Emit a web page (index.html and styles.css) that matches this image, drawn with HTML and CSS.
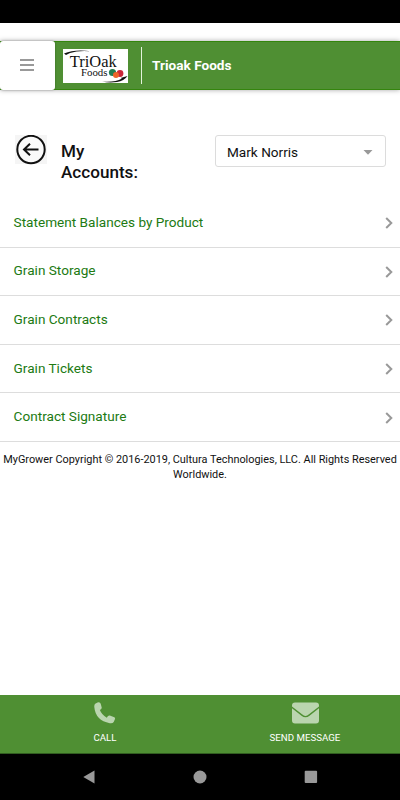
FILE: index.html
```html
<!DOCTYPE html>
<html lang="en">
<head>
<meta charset="utf-8">
<title>Trioak Foods</title>
<link rel="stylesheet" href="styles.css">
</head>
<body>
<div class="status"></div>
<header class="header">
  <button class="menu" aria-label="Menu"><i></i><i></i><i></i></button>
  <svg class="logo" viewBox="0 0 65 34">
    <rect width="65" height="34" fill="#fff"/>
    <path d="M1 4.500Q12-.2 28 2.300Q15 1.300 7 4L3 6Z" fill="#111"/>
    <path d="M39 32.500Q52 33.500 59 29.500L57.500 29L64.500 27Q61 32 54 33Q46 34 39 32.500Z" fill="#111"/>
    <text x="6.700" y="18" font-size="17" textLength="47" lengthAdjust="spacingAndGlyphs">TriOak</text>
    <text x="18" y="27.300" font-size="11" textLength="26.500" lengthAdjust="spacingAndGlyphs">Foods</text>
    <circle cx="49.500" cy="23.500" r="3.600" fill="#237c50"/>
    <circle cx="57" cy="24.500" r="3.400" fill="#cb2639"/>
    <circle cx="53" cy="26" r="3" fill="#ed6328"/>
  </svg>
  <span class="rule"></span>
  <h1>Trioak Foods</h1>
</header>
<main>
  <section class="account">
    <svg class="back" viewBox="0 0 32 30">
      <rect width="32" height="29" fill="#f5f5f5"/>
      <circle cx="16" cy="14.500" r="13.700" fill="#fafafa" stroke="#111" stroke-width="2"/>
      <path d="M23.500 14.500H9M15 8.700L9 14.500L15 20.300" fill="none" stroke="#111" stroke-width="2"/>
    </svg>
    <h2>My<br>Accounts:</h2>
    <div class="select"><span>Mark Norris</span><svg viewBox="0 0 10 5"><path d="M.5 0H9.500L5 4.800Z" fill="#999"/></svg></div>
  </section>
  <nav class="list">
    <a><span>Statement Balances by Product</span><svg viewBox="0 0 8 12"><path d="M1.200 1L6.300 6L1.200 11"/></svg></a>
    <a><span>Grain Storage</span><svg viewBox="0 0 8 12"><path d="M1.200 1L6.300 6L1.200 11"/></svg></a>
    <a><span>Grain Contracts</span><svg viewBox="0 0 8 12"><path d="M1.200 1L6.300 6L1.200 11"/></svg></a>
    <a><span>Grain Tickets</span><svg viewBox="0 0 8 12"><path d="M1.200 1L6.300 6L1.200 11"/></svg></a>
    <a><span>Contract Signature</span><svg viewBox="0 0 8 12"><path d="M1.200 1L6.300 6L1.200 11"/></svg></a>
  </nav>
  <p class="copyright">MyGrower Copyright © 2016-2019, Cultura Technologies, LLC. All Rights Reserved<br>Worldwide.</p>
</main>
<footer class="actions">
  <a class="call"><svg viewBox="0 0 22 22"><path d="M1.200 1.800L3.500.5Q6-.5 6.700 1.800L7.700 5.500Q8 7 5.900 8Q7.500 12.500 12.800 15.700Q14 13.300 15.800 13.600L19.700 15Q21.700 15.700 20.800 17.500L19.700 20Q18.600 21.700 15.800 21.200Q1.500 18.500.3 5Q.1 2.800 1.200 1.800Z"/></svg><span>CALL</span></a>
  <a class="message"><svg viewBox="0 0 27 22"><path d="M0 3.500Q0 .5 3 .5H24Q27 .5 27 3.500V4.500L17 12.300Q13.500 15.500 10 12.300L0 4.500Z"/><path d="M0 6.300L9.500 13.700Q13.500 16.800 17.500 13.700L27 6.300V18.500Q27 21.500 24 21.500H3Q0 21.500 0 18.500Z"/></svg><span>SEND MESSAGE</span></a>
</footer>
<div class="system">
  <svg viewBox="0 0 12 14"><path d="M11.500.5V13.500L.3 7Z"/></svg>
  <svg viewBox="0 0 14 14"><circle cx="7" cy="7" r="6.500"/></svg>
  <svg viewBox="0 0 14 14"><rect x=".7" y=".7" width="12.400" height="12.400" rx="1"/></svg>
</div>
</body>
</html>
```
FILE: styles.css
```css
* { box-sizing: border-box; }
body {
  margin: 0;
  height: 800px;
  display: flex;
  flex-direction: column;
  overflow: hidden;
  background: #fff;
  color: #111;
  font-family: Roboto, "Liberation Sans", sans-serif;
}
svg { display: block; flex: none; }
.status { height: 23px; background: #000; }
.header {
  height: 49px;
  margin-top: 18px;
  display: flex;
  align-items: center;
  background: #4f8f33;
  border: solid #34850d;
  border-width: 1px 0;
  box-shadow: 0 0 5px rgba(0, 0, 0, .35);
}
.menu {
  width: 55px;
  height: 49px;
  padding: 0 1px 2px 0;
  border: 0;
  border-radius: 3px;
  background: #fff;
  box-shadow: 0 0 2px rgba(0, 0, 0, .35);
  display: flex;
  flex-direction: column;
  align-items: center;
  justify-content: center;
  gap: 3px;
}
.menu i { width: 14px; height: 2px; background: #999; }
.logo { width: 65px; height: 34px; margin-left: 8px; }
.logo text { font-family: "Liberation Serif", serif; fill: #111; }
.rule { width: 1px; height: 37px; margin-left: 13px; background: #e4f3dc; }
h1 { margin: -2px 0 0 10px; color: #fff; font-size: 13.600px; font-weight: 700; line-height: 20px; }
.account { display: flex; align-items: flex-start; height: 109px; padding: 45px 14px 0 15px; }
.back { width: 32px; height: 30px; }
h2 { flex: 1; margin: 6px 0 0 14px; font-size: 17.100px; line-height: 20.500px; font-weight: 500; color: #111; }
.select {
  width: 171px;
  height: 32px;
  display: flex;
  align-items: center;
  justify-content: space-between;
  padding: 2px 12px 0 11px;
  border: 1px solid #dcdcdc;
  border-radius: 3px;
  font-size: 13.600px;
}
.select svg { width: 10px; height: 5px; }
.list a {
  height: 48.600px;
  display: flex;
  align-items: center;
  justify-content: space-between;
  padding: 0 7px 0 13.600px;
  border-bottom: 1px solid #ddd;
  color: #217a12;
  font-size: 13.600px;
}
.list span { margin-top: -2px; }
.list svg { width: 8px; height: 12px; margin-top: 1px; fill: none; stroke: #999; stroke-width: 2; }
.copyright { margin: 10px 0 0; text-align: center; font-size: 10.900px; line-height: 15px; white-space: nowrap; }
.actions { height: 59px; margin-top: auto; display: flex; padding-left: 5px; background: #4f8f33; border-bottom: 1px solid #315d20; }
.actions a { flex: none; width: 200px; display: flex; flex-direction: column; align-items: center; padding-top: 7px; color: #fff; font-size: 9.700px; line-height: 12px; }
.actions svg { height: 22px; margin-bottom: 8px; fill: #bad5af; }
.call svg { width: 22px; }
.message svg { width: 27px; }
.system { height: 46px; display: flex; align-items: center; background: #000; padding-left: 83px; }
.system svg { width: 14px; height: 14px; fill: #999; margin-right: 97px; }
.system svg:first-child { width: 12px; margin-right: 98px; }
```
